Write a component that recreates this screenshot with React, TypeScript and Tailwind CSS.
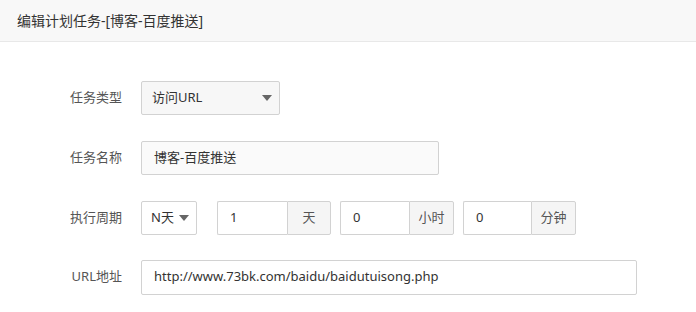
import React from "react";

const font = { fontFamily: '"Noto Sans", "Noto Sans CJK SC", sans-serif' };

const Caret = () => (
  <svg width="10" height="6" viewBox="0 0 10 6" className="shrink-0">
    <path d="M0 0 L10 0 L5 6 Z" fill="#666" />
  </svg>
);

const Row = ({ label, children }: { label: string; children: React.ReactNode }) => (
  <div className="flex h-[34px] items-center">
    <div className="w-[122px] shrink-0 text-right text-[13px] text-[#555]">{label}</div>
    <div className="ml-[19px] flex h-full items-center">{children}</div>
  </div>
);

const Group = ({ value, unit, w, uw }: { value: string; unit: string; w: string; uw: string }) => (
  <div className="flex h-full">
    <div className={`${w} flex h-full items-center rounded-l-[2px] border border-r-0 border-[#d2d2d2] bg-white pl-[12px] text-[13px] text-[#333]`}>
      {value}
    </div>
    <div className={`${uw} flex h-full items-center justify-center rounded-r-[2px] border border-[#d2d2d2] bg-[#f5f5f5] text-[13px] text-[#555]`}>
      {unit}
    </div>
  </div>
);

export default function App() {
  return (
    <div className="h-[312px] w-[696px] bg-white" style={font}>
      <div className="flex h-[42px] items-center border-b border-[#e8e8e8] bg-[#f8f8f8] pl-[17px] text-[14px] text-[#333]">
        编辑计划任务-[博客-百度推送]
      </div>
      <div className="flex flex-col gap-[26px] pt-[39px]">
        <Row label="任务类型">
          <div className="flex h-full w-[139px] items-center justify-between rounded-[2px] border border-[#d2d2d2] bg-[#f7f7f7] pl-[10px] pr-[7px] text-[13px] text-[#333]">
            <span>访问URL</span>
            <Caret />
          </div>
        </Row>
        <Row label="任务名称">
          <div className="flex h-full w-[298px] items-center rounded-[2px] border border-[#d2d2d2] bg-[#fafafa] pl-[12px] text-[13px] text-[#333]">
            博客-百度推送
          </div>
        </Row>
        <Row label="执行周期">
          <div className="flex h-full w-[56px] items-center justify-between rounded-[2px] border border-[#d2d2d2] bg-white pl-[9px] pr-[7px] text-[13px] text-[#333]">
            <span>N天</span>
            <Caret />
          </div>
          <div className="ml-[20px] flex h-full gap-[9px]">
            <Group value="1" unit="天" w="w-[70px]" uw="w-[44px]" />
            <Group value="0" unit="小时" w="w-[69px]" uw="w-[45px]" />
            <Group value="0" unit="分钟" w="w-[68px]" uw="w-[45px]" />
          </div>
        </Row>
        <div className="-mt-[1px]">
          <Row label="URL地址">
            <div className="flex h-[35px] w-[496px] items-center rounded-[2px] border border-[#d2d2d2] bg-white pl-[12px] text-[13px] text-[#333]">
              http://www.73bk.com/baidu/baidutuisong.php
            </div>
          </Row>
        </div>
      </div>
    </div>
  );
}
